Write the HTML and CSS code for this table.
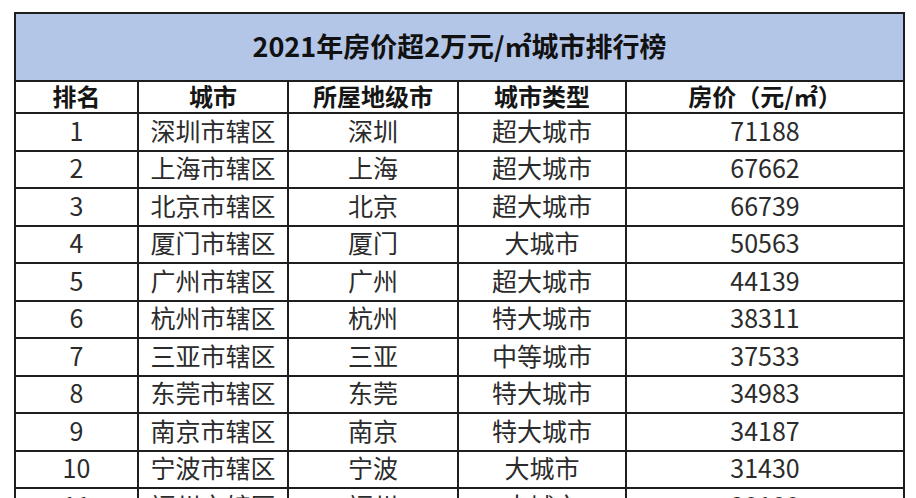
FILE: index.html
```html
<!DOCTYPE html>
<html lang="zh-CN">
<head>
<meta charset="utf-8">
<title>2021年房价超2万元/㎡城市排行榜</title>
<link rel="stylesheet" href="styles.css">
</head>
<body>
<div class="page">
  <table class="rank">
    <colgroup>
      <col class="c1"><col class="c2"><col class="c3"><col class="c4"><col class="c5">
    </colgroup>
    <thead>
      <tr class="title-row"><th colspan="5">2021年房价超2万元/㎡城市排行榜</th></tr>
      <tr class="head-row"><th>排名</th><th>城市</th><th>所屋地级市</th><th>城市类型</th><th>房价（元/㎡）</th></tr>
    </thead>
    <tbody>
      <tr><td>1</td><td>深圳市辖区</td><td>深圳</td><td>超大城市</td><td>71188</td></tr>
      <tr><td>2</td><td>上海市辖区</td><td>上海</td><td>超大城市</td><td>67662</td></tr>
      <tr><td>3</td><td>北京市辖区</td><td>北京</td><td>超大城市</td><td>66739</td></tr>
      <tr><td>4</td><td>厦门市辖区</td><td>厦门</td><td>大城市</td><td>50563</td></tr>
      <tr><td>5</td><td>广州市辖区</td><td>广州</td><td>超大城市</td><td>44139</td></tr>
      <tr><td>6</td><td>杭州市辖区</td><td>杭州</td><td>特大城市</td><td>38311</td></tr>
      <tr><td>7</td><td>三亚市辖区</td><td>三亚</td><td>中等城市</td><td>37533</td></tr>
      <tr><td>8</td><td>东莞市辖区</td><td>东莞</td><td>特大城市</td><td>34983</td></tr>
      <tr><td>9</td><td>南京市辖区</td><td>南京</td><td>特大城市</td><td>34187</td></tr>
      <tr><td>10</td><td>宁波市辖区</td><td>宁波</td><td>大城市</td><td>31430</td></tr>
      <tr><td>11</td><td>福州市辖区</td><td>福州</td><td>大城市</td><td>30100</td></tr>
    </tbody>
  </table>
</div>
</body>
</html>
```
FILE: styles.css
```css
html, body {
  margin: 0;
  padding: 0;
  background: #ffffff;
  overflow: hidden;
}
.page {
  width: 916px;
  height: 498px;
  overflow: hidden;
  padding: 12px 0 0 14px;
  box-sizing: border-box;
}
.rank {
  border-collapse: collapse;
  table-layout: fixed;
  width: 889px;
  font-family: "Noto Sans CJK SC", "Noto Sans", sans-serif;
  color: #2a2a2a;
}
.c1 { width: 123px; }
.c2 { width: 150px; }
.c3 { width: 170px; }
.c4 { width: 168px; }
.c5 { width: 278px; }
.rank th, .rank td {
  border: 2px solid #1e1e1e;
  text-align: center;
  padding: 0 0 3px 0;
  line-height: 1;
  white-space: nowrap;
}
.title-row th {
  height: 63px;
  background: #b4c6e7;
  font-size: 27px;
  font-weight: 700;
  color: #111;
}
.head-row th {
  height: 28px;
  padding-bottom: 2px;
  font-size: 24px;
  font-weight: 700;
  color: #151515;
}
.rank td {
  height: 32.5px;
  font-size: 25px;
  font-weight: 400;
  color: #2b2b2b;
}
```
